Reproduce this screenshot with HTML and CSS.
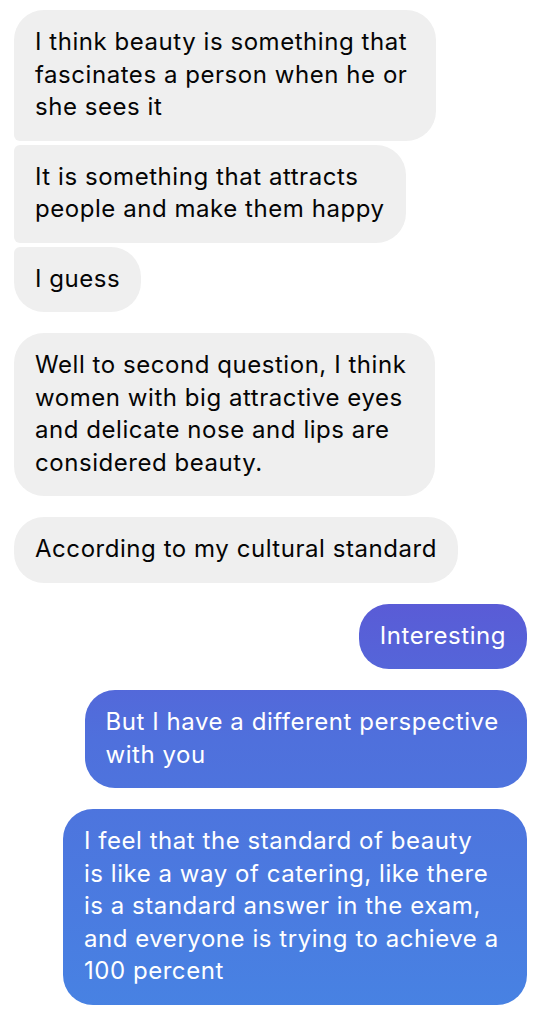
FILE: index.html
```html
<!DOCTYPE html>
<html lang="en">
<head>
<meta charset="utf-8">
<title>Chat</title>
<link rel="stylesheet" href="styles.css">
</head>
<body>
<main class="thread">
  <section class="group group-in">
    <div class="bubble in first">I think beauty is something that&nbsp;<br>fascinates a person when he or&nbsp;<br>she sees it</div>
    <div class="bubble in mid">It is something that attracts&nbsp;<br>people and make them happy</div>
    <div class="bubble in last">I guess</div>
  </section>
  <section class="group group-in">
    <div class="bubble in single">Well to second question, I think&nbsp;<br>women with big attractive eyes&nbsp;<br>and delicate nose and lips are&nbsp;<br>considered beauty.</div>
  </section>
  <section class="group group-in">
    <div class="bubble in single">According to my cultural standard</div>
  </section>
  <section class="group group-out">
    <div class="bubble out single">Interesting</div>
  </section>
  <section class="group group-out">
    <div class="bubble out single">But I have a different perspective&nbsp;<br>with you</div>
  </section>
  <section class="group group-out">
    <div class="bubble out single">I feel that the standard of beauty&nbsp;<br>is like a way of catering, like there&nbsp;<br>is a standard answer in the exam,&nbsp;<br>and everyone is trying to achieve a&nbsp;<br>100 percent</div>
  </section>
</main>
</body>
</html>
```

FILE: styles.css
```css
html, body {
  margin: 0;
  padding: 0;
  background: #ffffff;
}

body {
  font-family: Inter, "Liberation Sans", Arial, sans-serif;
  -webkit-font-smoothing: antialiased;
}

.thread {
  display: flex;
  flex-direction: column;
  gap: 21px;
  padding: 10px 14px 0 14px;
}

.group {
  display: flex;
  flex-direction: column;
  gap: 4px;
}

.group-in {
  align-items: flex-start;
}

.group-out {
  align-items: flex-end;
}

.bubble {
  font-size: 24px;
  line-height: 32.5px;
  padding: 16px 21px 17px 21px;
  border-radius: 30px;
  white-space: nowrap;
  letter-spacing: 0.55px;
}

.in {
  background: #efefef;
  color: #050505;
}

.in.first {
  border-bottom-left-radius: 6px;
}

.in.mid {
  border-top-left-radius: 6px;
  border-bottom-left-radius: 6px;
}

.in.last {
  border-top-left-radius: 6px;
}

.out {
  color: #ffffff;
  background: linear-gradient(180deg, #6d49d0 0px, #5a5bd6 600px, #4f70dc 740px, #4783e3 1024px);
  background-attachment: fixed;
}
```
